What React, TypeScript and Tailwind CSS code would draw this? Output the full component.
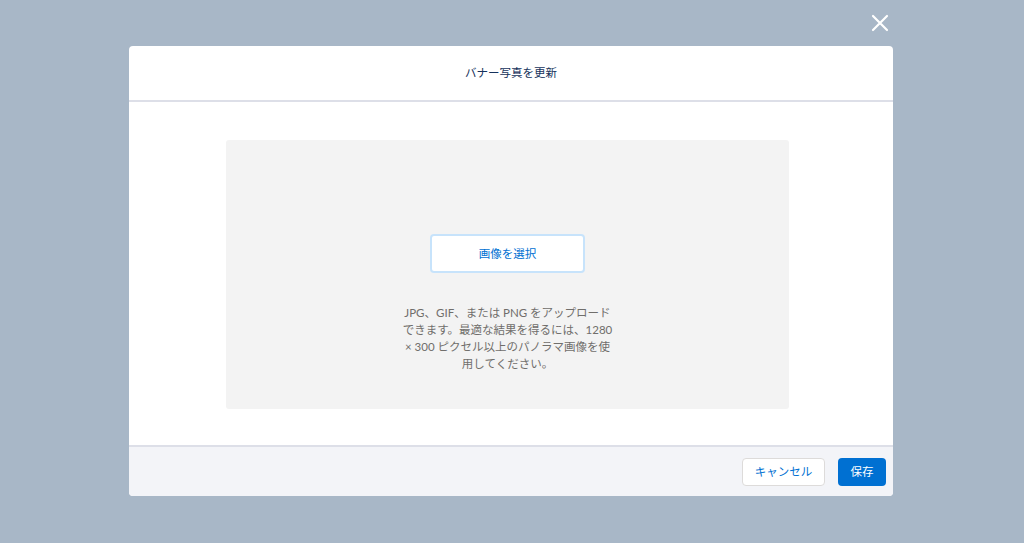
export default function App() {
  return (
    <div
      className="relative w-[1024px] h-[543px] bg-[#a8b7c7] flex flex-col items-center pr-[2px]"
      style={{ fontFamily: 'Lato, "Noto Sans CJK JP", sans-serif' }}
    >
      <button className="absolute top-[14px] right-[135px] w-[18px] h-[18px] text-white">
        <svg viewBox="0 0 18 18" className="w-[18px] h-[18px]" fill="none" stroke="currentColor" strokeWidth="2.2" strokeLinecap="round">
          <path d="M2 2 L16 16 M16 2 L2 16" />
        </svg>
      </button>

      <div className="mt-[46px] w-[764px] bg-white rounded-[4px] overflow-hidden flex flex-col">
        <div className="h-[56px] border-b-2 border-[#dddfe8] flex items-center justify-center">
          <h2 className="text-[11.5px] text-[#16325c]">バナー写真を更新</h2>
        </div>

        <div className="h-[343px] pl-[97px] pt-[38px]">
          <div className="w-[563px] h-[269px] bg-[#f3f3f3] rounded-[3px] flex flex-col items-center pt-[94px]">
            <button className="w-[155px] h-[39px] bg-white border-2 border-[#c7e3fb] rounded-[4px] text-[11.5px] text-[#0070d2]">
              画像を選択
            </button>
            <p className="mt-[31px] text-[11.5px] leading-[17px] text-[#706e6b] text-center">
              JPG、GIF、または PNG をアップロード
              <br />
              できます。最適な結果を得るには、1280
              <br />
              × 300 ピクセル以上のパノラマ画像を使
              <br />
              用してください。
            </p>
          </div>
        </div>

        <div className="h-[51px] bg-[#f3f4f8] border-t-2 border-[#dddfe8] flex items-center justify-end gap-[13px] pr-[7px] pt-[1px]">
          <button className="w-[83px] h-[28px] bg-white border border-[#dddbda] rounded-[4px] text-[11.5px] text-[#0070d2]">
            キャンセル
          </button>
          <button className="w-[48px] h-[28px] bg-[#0070d2] rounded-[4px] text-[11.5px] text-white">
            保存
          </button>
        </div>
      </div>
    </div>
  );
}
